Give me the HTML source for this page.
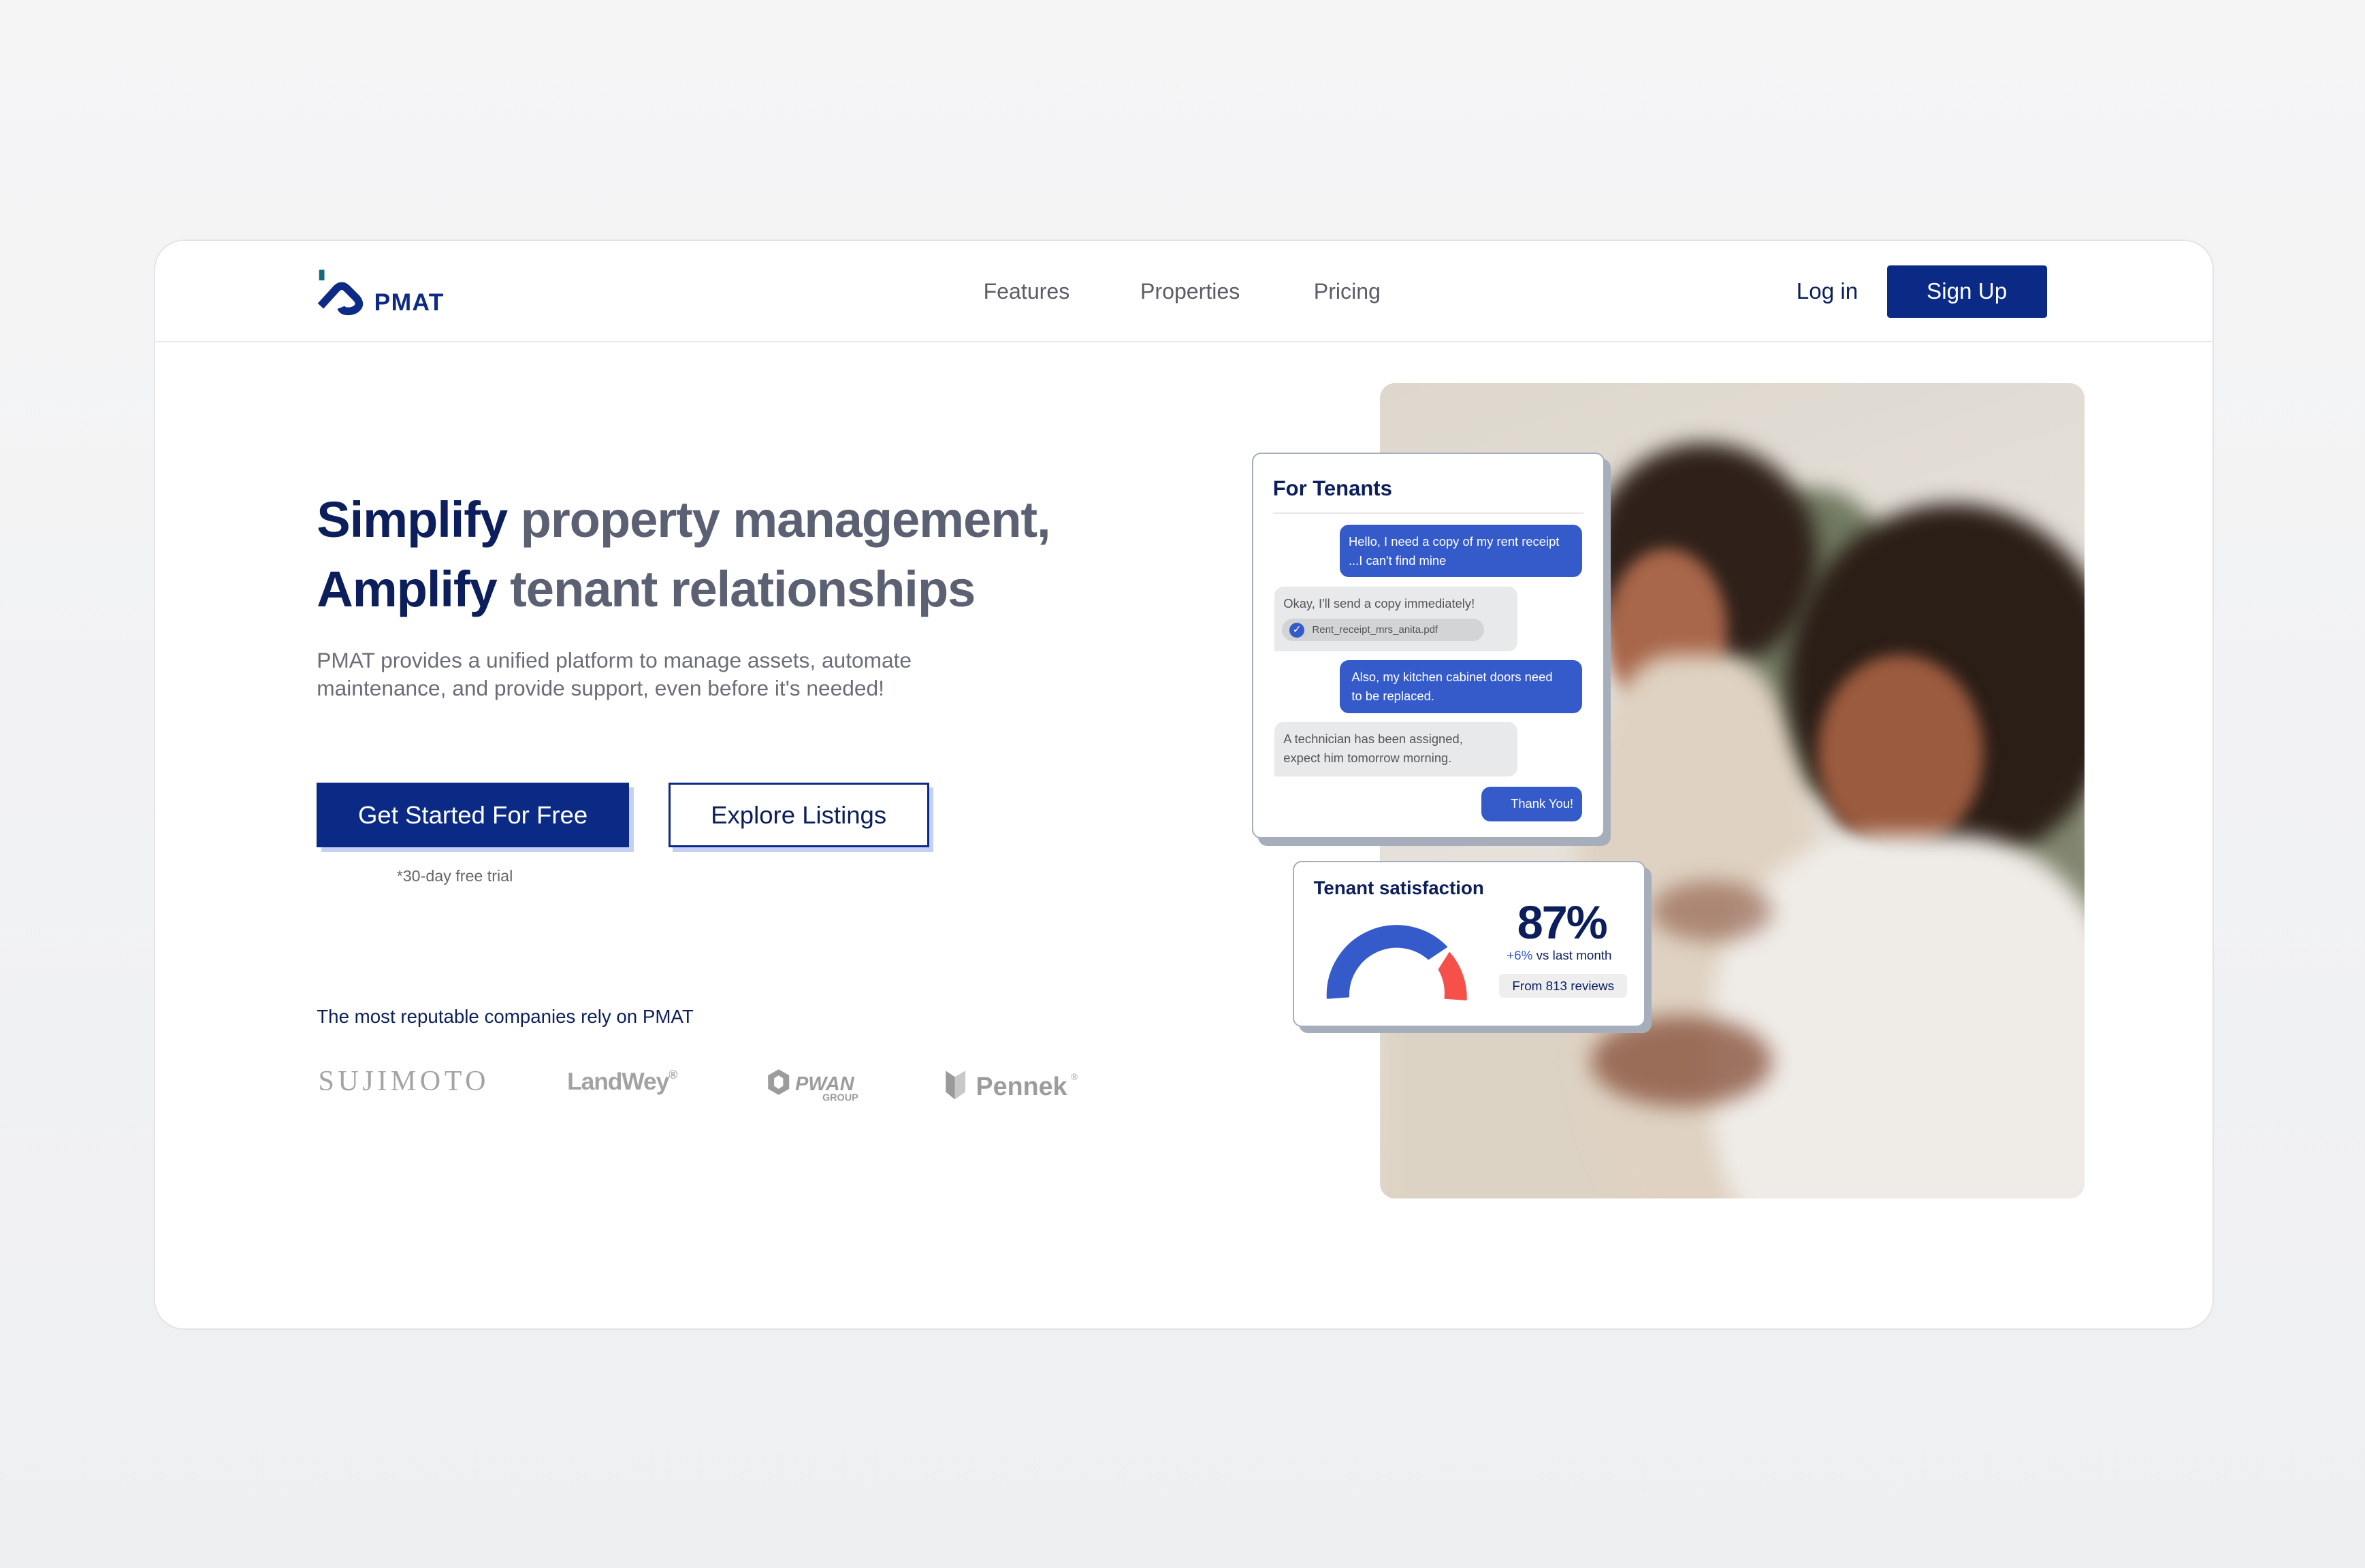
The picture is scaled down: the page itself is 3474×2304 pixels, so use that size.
<!DOCTYPE html>
<html><head><meta charset="utf-8">
<style>
html,body{margin:0;padding:0}
html{width:3474px;height:2304px;overflow:hidden;background:#eff0f2}
body{zoom:2.2156;width:1568px;height:1040px;position:relative;font-family:"Liberation Sans",sans-serif;background:linear-gradient(#f5f5f6,#eeeff1);}
.abs{position:absolute}
.card{left:102px;top:159px;width:1364px;height:721px;background:#fff;border:1px solid #e3e4e7;border-radius:20px;overflow:hidden}
.nav a{position:absolute;top:185px;font-size:14.5px;color:#5a5d66;text-decoration:none}
h1{position:absolute;left:210px;top:322px;margin:0;font-size:33.5px;line-height:46px;font-weight:700;color:#5b6073;letter-spacing:-0.5px}
h1 b{color:#0c1f5c}
.btn{position:absolute;height:43px;box-sizing:border-box;font-size:16.5px;display:flex;align-items:center;justify-content:center}
.bubble{position:absolute;font-size:8.3px;line-height:12.5px;border-radius:6px;padding:0 6px;box-sizing:border-box}
.me{background:#355bcb;color:#fff;right:14px}
.them{background:#e8e9eb;color:#555;left:14px;border-radius:6px 6px 6px 0}
.blob{position:absolute;border-radius:50%;filter:blur(7px)}
</style></head><body>
<div class="abs card"></div>
<div class="abs" style="left:102px;top:226px;width:1366px;height:1px;background:#e8e9ec"></div>

<!-- logo -->
<svg class="abs" style="left:208px;top:177px" width="100" height="34" viewBox="0 0 100 34">
<rect x="3.5" y="2" width="3.5" height="7" fill="#0f6c7a"/>
<path d="M4.5 26 L15 14.5 Q18.5 11 22 14.5 L28.5 21 Q31.5 25 28.5 27.5 Q26.5 29.5 22.5 29.5 Q19 29.5 18 27" fill="none" stroke="#0c2a86" stroke-width="5.2" stroke-linejoin="round"/>
<text x="40" y="29" font-family="Liberation Sans" font-weight="700" font-size="16" fill="#0c2a86" letter-spacing="0.6">PMAT</text>
</svg>

<div class="nav"><a style="left:652px">Features</a><a style="left:756px">Properties</a><a style="left:871px">Pricing</a></div>
<div class="abs" style="left:1191px;top:185px;font-size:15px;color:#0c1f5c">Log in</div>
<div class="abs" style="left:1251px;top:176px;width:106px;height:35px;background:#0b2a86;border-radius:2px;color:#fff;font-size:15px;display:flex;align-items:center;justify-content:center">Sign Up</div>

<h1><b>Simplify</b> property management,<br><b>Amplify</b> tenant relationships</h1>
<div class="abs" style="left:210px;top:429px;font-size:14.3px;line-height:18.5px;color:#6b6e78;width:430px">PMAT provides a unified platform to manage assets, automate maintenance, and provide support, even before it's needed!</div>

<div class="btn" style="left:213px;top:522px;width:207px;background:#c6d0f2"></div>
<div class="btn" style="left:210px;top:519px;width:207px;background:#0b2a86;color:#fff">Get Started For Free</div>
<div class="btn" style="left:446px;top:522px;width:173px;background:#c6d0f2"></div>
<div class="btn" style="left:443px;top:519px;width:173px;background:#fff;border:1.5px solid #0b2a86;color:#0c1f5c">Explore Listings</div>
<div class="abs" style="left:263px;top:575px;font-size:10.5px;color:#666">*30-day free trial</div>

<div class="abs" style="left:210px;top:667px;font-size:12.5px;color:#0c1f5c">The most reputable companies rely on PMAT</div>
<div class="abs" style="left:211px;top:706px;font-family:'Liberation Serif',serif;font-size:19px;letter-spacing:2.5px;color:#a4a4a4">SUJIMOTO</div>
<div class="abs" style="left:376px;top:708px;font-size:16px;font-weight:700;color:#a2a2a2;letter-spacing:-0.5px">LandWey<span style="font-size:8px;vertical-align:top">®</span></div>
<svg class="abs" style="left:508px;top:708px" width="70" height="24"><path d="M8 1 L15 5 L15 14 L8 18 L1 14 L1 5Z M8 5 L5 7 L5 12 L8 14 L11 12 L11 7Z" fill="#9c9c9c" fill-rule="evenodd"/><text x="19" y="15" font-family="Liberation Sans" font-weight="700" font-style="italic" font-size="13" fill="#9c9c9c">PWAN</text><text x="37" y="22" font-family="Liberation Sans" font-weight="700" font-size="6.5" fill="#9c9c9c">GROUP</text></svg>
<svg class="abs" style="left:626px;top:708px" width="95" height="24"><path d="M1 2 L7 6 L7 21 L1 16Z" fill="#9a9a9a"/><path d="M7 6 L14 2 L14 16 L7 21Z" fill="#c8c8c8"/><text x="21" y="18" font-family="Liberation Sans" font-weight="700" font-size="17" fill="#9c9c9c">Pennek</text><text x="84" y="8" font-family="Liberation Sans" font-size="6" fill="#9c9c9c">®</text></svg>

<!-- photo -->
<div class="abs" style="left:915px;top:254px;width:467px;height:541px;border-radius:10px;overflow:hidden;background:linear-gradient(160deg,#ddd7cd,#e6e2db 50%,#d9d1c4)">
 <div class="blob" style="left:0;top:380px;width:200px;height:200px;background:#ddd3c4;border-radius:10px"></div>
 <div class="blob" style="left:230px;top:70px;width:120px;height:200px;background:#4d5a3c;opacity:.75"></div>
 <div class="blob" style="left:390px;top:240px;width:90px;height:200px;background:#5a6346;opacity:.7"></div>
 <div class="blob" style="left:140px;top:40px;width:150px;height:150px;background:#2f211a"></div>
 <div class="blob" style="left:150px;top:110px;width:80px;height:110px;background:#a8664a;filter:blur(5px)"></div>
 <div class="blob" style="left:130px;top:180px;width:160px;height:380px;background:#dfd2c2;border-radius:40%"></div>
 <div class="blob" style="left:270px;top:80px;width:220px;height:240px;background:#2b1e17"></div>
 <div class="blob" style="left:290px;top:180px;width:110px;height:130px;background:#9b5b3e;filter:blur(5px)"></div>
 <div class="blob" style="left:220px;top:300px;width:270px;height:300px;background:#efebe6;border-radius:40%"></div>
 <div class="blob" style="left:140px;top:420px;width:120px;height:60px;background:#8a5540;opacity:.8"></div>
 <div class="blob" style="left:180px;top:330px;width:80px;height:40px;background:#8a5540;opacity:.6"></div>
</div>

<!-- chat card -->
<div class="abs" style="left:834px;top:304px;width:234px;height:257px;background:#a7aebb;border-radius:6px"></div>
<div class="abs" style="left:830px;top:300px;width:234px;height:256px;background:#fff;border:1px solid #a7aebb;border-radius:6px;box-sizing:border-box">
 <div class="abs" style="left:13px;top:15px;font-size:14px;font-weight:700;color:#0c1f5c">For Tenants</div>
 <div class="abs" style="left:13px;top:39px;width:206px;height:1px;background:#e8e8ea"></div>
 <div class="bubble me" style="top:47px;width:161px;height:35px;padding-top:5px">Hello, I need a copy of my rent receipt<br>...I can't find mine</div>
 <div class="bubble them" style="top:88px;width:161px;height:43px;padding-top:5px">Okay, I'll send a copy immediately!
  <div style="margin-top:4px;margin-left:-1px;width:134px;height:15px;border-radius:8px;background:#d3d4d6;font-size:6.8px;line-height:15px;color:#555;position:relative;padding-left:20px;box-sizing:border-box"><span style="position:absolute;left:5px;top:2.5px;width:10px;height:10px;border-radius:50%;background:#355bcb;color:#fff;font-size:7px;line-height:10px;text-align:center">✓</span>Rent_receipt_mrs_anita.pdf</div></div>
 <div class="bubble me" style="top:137px;width:161px;height:35px;padding-top:5px;padding-left:8px">Also, my kitchen cabinet doors need<br>to be replaced.</div>
 <div class="bubble them" style="top:178px;width:161px;height:36px;padding-top:5px">A technician has been assigned,<br>expect him tomorrow morning.</div>
 <div class="bubble me" style="top:221px;width:67px;height:23px;line-height:23px;text-align:right">Thank You!</div>
</div>

<!-- satisfaction card -->
<div class="abs" style="left:861px;top:575px;width:234px;height:110px;background:#a7aebb;border-radius:6px"></div>
<div class="abs" style="left:857px;top:571px;width:234px;height:110px;background:#fff;border:1px solid #a7aebb;border-radius:6px;box-sizing:border-box">
 <div class="abs" style="left:13px;top:10px;font-size:12.5px;font-weight:700;color:#0c1f5c">Tenant satisfaction</div>
 <svg class="abs" style="left:18px;top:36px" width="100" height="60" viewBox="0 0 100 60">
  <path d="M4 54 A46 46 0 0 1 83 20 L71 28 A32 32 0 0 0 18 53 Z" fill="#355bcb" stroke="#355bcb" stroke-width="1" stroke-linejoin="round"/>
  <path d="M85 24 A46 46 0 0 1 96 55 L82 54 A32 32 0 0 0 78 35 Z" fill="#f5504a" stroke="#f5504a" stroke-width="1" stroke-linejoin="round"/>
 </svg>
 <div class="abs" style="left:148px;top:22px;font-size:31px;font-weight:700;color:#0c1f5c;letter-spacing:-1px">87%</div>
 <div class="abs" style="left:141px;top:57px;font-size:8.5px;color:#0c1f5c"><span style="color:#355bcb">+6%</span> vs last month</div>
 <div class="abs" style="left:136px;top:74px;width:85px;height:16px;background:#eeeeef;border-radius:3px;font-size:8.5px;color:#0c1f5c;text-align:center;line-height:16px">From 813 reviews</div>
</div>
</body></html>
